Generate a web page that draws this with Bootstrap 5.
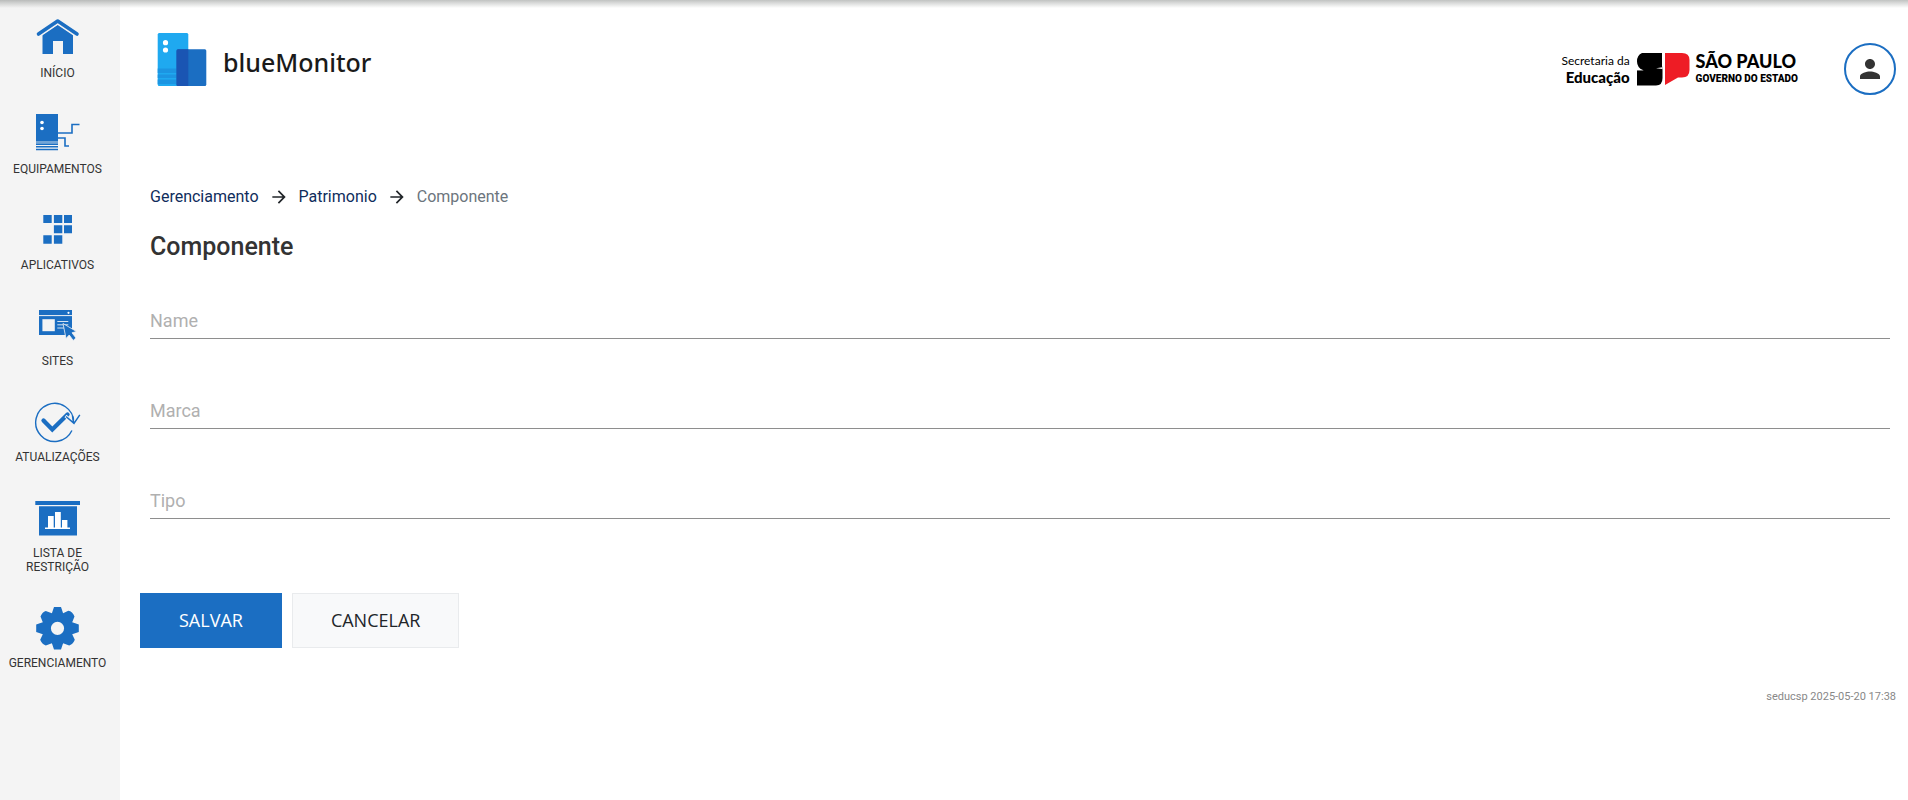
<!DOCTYPE html>
<html lang="pt-BR">
<head>
<meta charset="utf-8">
<meta name="viewport" content="width=device-width, initial-scale=1">
<title>blueMonitor - Componente</title>
<link href="https://cdn.jsdelivr.net/npm/bootstrap@5.3.0/dist/css/bootstrap.min.css" rel="stylesheet">
<style>
  :root { --brand: #1b6ec2; --ink: #333; }
  body { font-family: Roboto, sans-serif; color: var(--ink); background: #fff; }
  .top-shade { height: 8px; background: linear-gradient(rgba(60,66,62,.32), rgba(60,66,62,.2) 35%, rgba(60,66,62,0)); pointer-events: none; }
  .side { width: 120px; padding: 14px 5px 0 0; background: #f4f4f4; }
  .side-list { gap: 30px; }
  .side-link { gap: 4px; font-size: 12px; line-height: 14px; color: var(--ink); text-decoration: none; text-align: center; }
  .side-link svg { width: 48px; height: 48px; fill: var(--brand); }
  .wire { fill: none; stroke: var(--brand); }
  .wire-gap { fill: none; stroke: #f4f4f4; }
  .topbar { padding: 32px 12px 0 37px; }
  .brand { gap: 16px; color: #1a1a1a; text-decoration: none; font: 500 25px/36px "Noto Sans", sans-serif; }
  .top-right { padding-top: 11px; }
  .gov { gap: 6px; color: #000; font-family: Lato, sans-serif; }
  .gov-dept { font-size: 12px; line-height: 17px; text-align: right; }
  .gov-dept strong { font-size: 15px; font-weight: 900; }
  .gov-name { font-size: 18px; line-height: 20px; font-weight: 900; }
  .gov-sub { font-family: Roboto, sans-serif; font-size: 10px; line-height: 16px; font-weight: 900; }
  .user-btn { width: 52px; height: 52px; margin-left: 46px; border: 2px solid var(--brand); background: #fff; }
  .content { padding: 90px 18px 0 30px; }
  .trail { gap: 10px; line-height: 24px; }
  .trail a { color: #0f2d5c; text-decoration: none; }
  .trail svg { width: 20px; height: 20px; fill: #212529; }
  .trail span { color: #6c757d; }
  .page-title { font-size: 25px; line-height: 30px; font-weight: 500; margin: 23px 0 0; }
  .fields { gap: 50px; margin-top: 37px; }
  .line-input { height: 40px; padding: 4px 0 0; border: 0; border-bottom: 1px solid #8e8e8e; border-radius: 0; font-size: 18px; line-height: 28px; color: var(--ink); background: transparent; }
  .line-label { padding-top: 8px; font-size: 18px; line-height: 28px; color: #b0b0b0; pointer-events: none; }
  .line-input:not(:placeholder-shown) + .line-label { visibility: hidden; }
  .actions { gap: 10px; margin: 74px 0 0 -10px; }
  .act { padding: 14px 38px; border-radius: 0; font: 400 18px/25px "Open Sans", sans-serif; }
  .act-save { color: #fff; background: var(--brand); border-color: var(--brand); }
  .act-cancel { color: #212529; background: #f8f9fa; border-color: #e9ebed; }
  .stamp { padding: 41px 12px 24px; font-size: 11px; line-height: 16px; color: #888; }
</style>
</head>
<body>
<div class="top-shade position-absolute top-0 start-0 w-100"></div>
<div class="d-flex min-vh-100">
  <nav class="side flex-shrink-0" aria-label="Principal">
    <ul class="side-list list-unstyled d-flex flex-column mb-0">
      <li><a class="side-link d-flex flex-column align-items-center" href="#">
        <svg viewBox="0 0 48 48"><path d="M8.500 20.500 23.700 10.500 39 20.500V40H29V27H19V40H8.500z"/><path d="M4.500 23.300 23.700 10.300 43 23.300" class="wire-gap" stroke-width="1.200"/><path class="wire" d="M4.500 20 23.700 7 43 20" stroke-width="3.600" stroke-linecap="round" stroke-linejoin="round"/></svg>
        INÍCIO</a></li>
      <li><a class="side-link d-flex flex-column align-items-center" href="#">
        <svg viewBox="0 0 48 48"><rect x="2" y="4" width="22" height="27"/><path opacity=".6" d="M2 31h22v2.500H2z"/><path d="M2 33.500h22v1.500H2zM2 36h22v1.500H2zM2 38.700h22v1.600H2z"/><circle cx="8" cy="12.500" r="1.800" fill="#fff"/><circle cx="8" cy="18.500" r="1.800" fill="#fff"/><path class="wire" d="M24 23H38V14.500H45.500M24 28H31V36H35" stroke-width="1.600"/></svg>
        EQUIPAMENTOS</a></li>
      <li><a class="side-link d-flex flex-column align-items-center" href="#">
        <svg viewBox="0 0 48 48"><path d="M9.300 9h8.400v8H9.300zM19.900 9h8.400v8h-8.400zM30 9h8v8h-8zM19.900 19.200h8.400v8h-8.400zM30 19.200h8v8h-8zM9.300 29.300h8.400v8.400H9.300zM19.900 29.300h8.400v8.400h-8.400z"/></svg>
        APLICATIVOS</a></li>
      <li><a class="side-link d-flex flex-column align-items-center" href="#">
        <svg viewBox="0 0 48 48"><path d="M5 8h33v25H5z"/><path d="M5 13.600h33" stroke="#f4f4f4"/><circle cx="34.500" cy="10.800" r="1.100" fill="#fff"/><path fill="#f4f4f4" d="M8.400 17.200h12.400v12H8.400z"/><path d="M23.300 19.500h11M23.300 22.800h11M23.300 26h7" stroke="#d5e3f1"/><path stroke="#f4f4f4" stroke-width=".8" d="M29 21.500 42.500 29.500 38 30.800 42 36 39.200 38.400 35.200 33 32 36.500z"/></svg>
        SITES</a></li>
      <li><a class="side-link d-flex flex-column align-items-center" href="#">
        <svg viewBox="0 0 48 48"><path class="wire" d="M37.900 32.500A19 19 0 1 1 39.700 24.500" stroke-width="1.400"/><path class="wire" d="M9.500 22.500 18.300 31.500 33.500 16.500" stroke-width="4.300" stroke-linecap="round"/><path class="wire-gap" d="M31.500 18 40 25.300 45.800 16.800" stroke-width="3"/><path class="wire" d="M32 18.500 40 25.300 45.800 16.800M39.700 25 38.500 18" stroke-width="1.500"/></svg>
        ATUALIZAÇÕES</a></li>
      <li><a class="side-link d-flex flex-column align-items-center" href="#">
        <svg viewBox="0 0 48 48"><path d="M1.300 7H46v4H1.300zM5 12.200h38V41.500H5z"/><path fill="#fff" d="M14 22h5.700v11.500h1.300V18h5.800v15.500h1.200V26h5.400v7.500H36V35H11v-1.500h3z"/></svg>
        LISTA DE<br>RESTRIÇÃO</a></li>
      <li><a class="side-link d-flex flex-column align-items-center" href="#">
        <svg viewBox="-23.500 -24.300 48 48"><path fill-rule="evenodd" d="M-3.500-21.300H3.500L5.600-15 10.800-17.500Q15-17 17-11.700L14.700-6 21.300-3.800V3.800L14.700 6 17.300 11.500Q16 15.500 11.700 17.300L5.600 15 3.500 21.300H-3.500L-5.600 15-11.700 17.300Q-16 15.500-17.300 11.500L-14.700 6-21.300 3.800V-3.800L-14.700-6-17-11.700Q-15.500-16-11.700-17.300L-5.600-15zM0-6.600A6.600 6.600 0 1 0 0 6.600 6.600 6.600 0 1 0 0-6.600z"/></svg>
        GERENCIAMENTO</a></li>
    </ul>
  </nav>

  <div class="flex-grow-1 d-flex flex-column">
    <header class="topbar d-flex justify-content-between align-items-start">
      <a class="brand d-flex" href="#">
        <svg width="50" height="55" viewBox="0 0 50 55" aria-hidden="true"><rect x=".7" y="1" width="30.600" height="53" rx="1.500" fill="#1fa9f0"/><path fill="#1c95e2" d="M.7 36.500h19V41h-19zM.7 42.500h19V46h-19zM.7 47.500h19V52h-19z"/><circle cx="8.500" cy="10.700" r="2.600" fill="#fff"/><circle cx="8.500" cy="18" r="2.600" fill="#fff"/><rect x="19.500" y="17.300" width="29.800" height="36.700" rx="1.500" fill="#1b6ec2"/><path fill="#1a55b3" d="M21 17.300h10.300V54H21q-1.500 0-1.500-1.500V18.800q0-1.500 1.500-1.500z"/></svg>
        <span class="pt-2 mt-1">blueMonitor</span>
      </a>
      <div class="top-right d-flex align-items-center">
        <div class="gov d-flex align-items-center">
          <div class="gov-dept">Secretaria da<br><strong>Educação</strong></div>
          <svg width="54" height="34" viewBox="0 0 54 34" aria-hidden="true"><path d="M6 1H26V14Q26.500 15.500 26.500 18V26Q26.500 33.500 20 33.500H1V18.300H7.500Q1 16 1 9.500T6 1z"/><path fill="#fff" d="M1 17.200 8 18.200H1zM26.500 15.300 20 16.200 26.500 17z"/><path fill="#ee1c25" d="M29 1H46Q53.500 1 53.500 8V18Q53.500 25.500 46 25.500H42L29 33z"/></svg>
          <div><div class="gov-name">SÃO PAULO</div><div class="gov-sub">GOVERNO DO ESTADO</div></div>
        </div>
        <button class="user-btn btn rounded-circle p-0 d-flex align-items-center justify-content-center" type="button" aria-label="Conta">
          <svg width="30" height="30" viewBox="0 0 24 24" fill="#333"><path d="M12 12c2.210 0 4-1.790 4-4s-1.790-4-4-4-4 1.790-4 4 1.790 4 4 4zm0 2c-2.670 0-8 1.340-8 4v2h16v-2c0-2.660-5.330-4-8-4z"/></svg>
        </button>
      </div>
    </header>

    <main class="content">
      <nav class="trail d-flex align-items-center" aria-label="Trilha">
        <a href="#">Gerenciamento</a>
        <svg viewBox="0 0 24 24"><path d="m12 4-1.410 1.410L16.170 11H4v2h12.170l-5.580 5.590L12 20l8-8z"/></svg>
        <a href="#">Patrimonio</a>
        <svg viewBox="0 0 24 24"><path d="m12 4-1.410 1.410L16.170 11H4v2h12.170l-5.580 5.590L12 20l8-8z"/></svg>
        <span aria-current="page">Componente</span>
      </nav>
      <h1 class="page-title">Componente</h1>
      <form>
        <div class="fields d-flex flex-column">
          <div class="position-relative"><input class="line-input form-control" id="name" type="text" placeholder=" "><label class="line-label position-absolute top-0 start-0" for="name">Name</label></div>
          <div class="position-relative"><input class="line-input form-control" id="marca" type="text" placeholder=" "><label class="line-label position-absolute top-0 start-0" for="marca">Marca</label></div>
          <div class="position-relative"><input class="line-input form-control" id="tipo" type="text" placeholder=" "><label class="line-label position-absolute top-0 start-0" for="tipo">Tipo</label></div>
        </div>
        <div class="actions d-flex">
          <button class="act act-save btn" type="submit">SALVAR</button>
          <button class="act act-cancel btn" type="button">CANCELAR</button>
        </div>
      </form>
    </main>
    <footer class="stamp text-end">seducsp 2025-05-20 17:38</footer>
  </div>
</div>
<script src="https://cdn.jsdelivr.net/npm/bootstrap@5.3.0/dist/js/bootstrap.bundle.min.js"></script>
</body>
</html>
